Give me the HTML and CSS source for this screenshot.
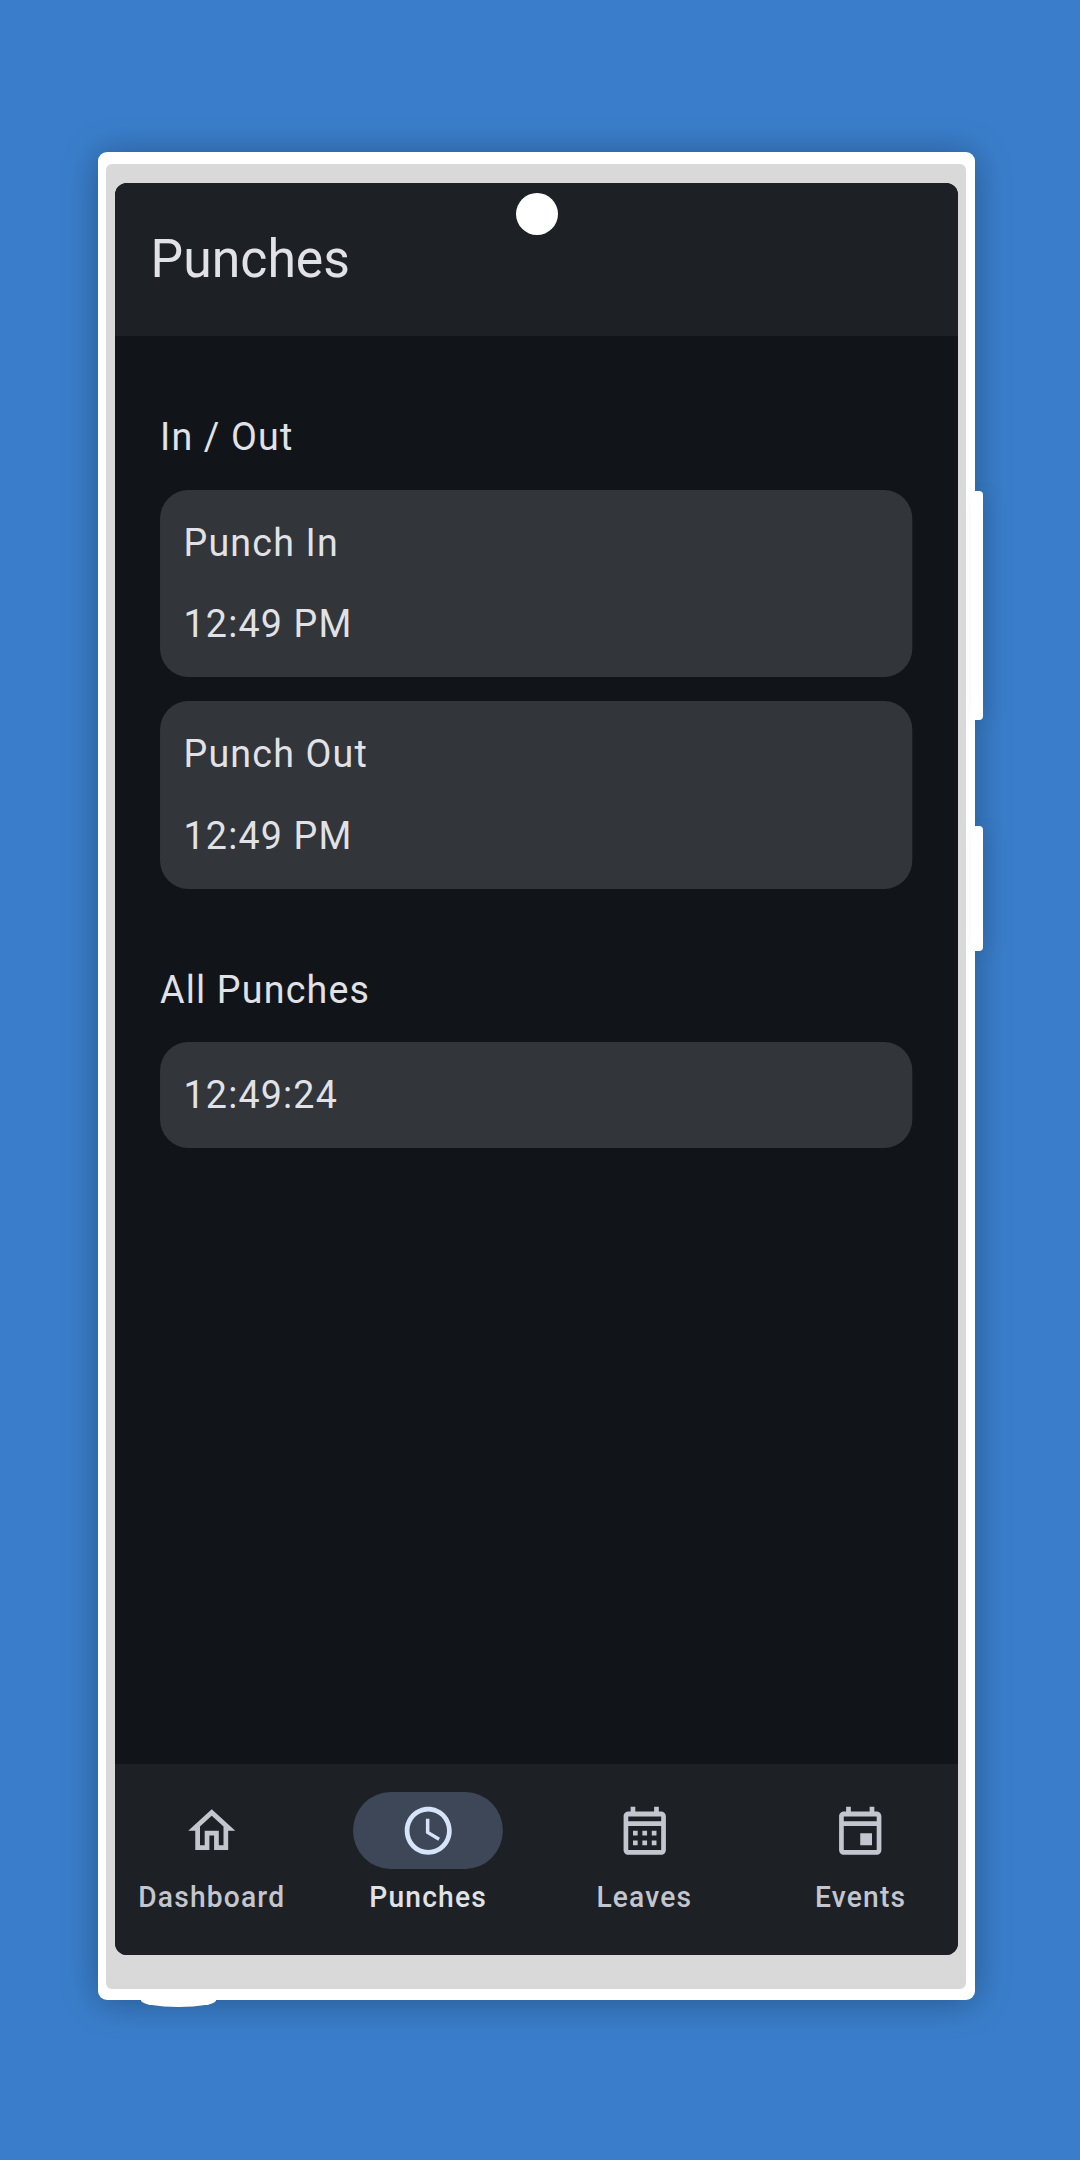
FILE: index.html
```html
<!DOCTYPE html>
<html lang="en">
<head>
<meta charset="utf-8">
<title>Punches</title>
<link rel="stylesheet" href="styles.css">
</head>
<body>
<div class="phone">
  <span class="side-key volume"></span>
  <span class="side-key power"></span>
  <span class="stylus"></span>
  <div class="bezel">
    <div class="screen">
      <div class="app">
        <header class="top-bar"><h1 class="title">Punches</h1></header>
        <main class="content">
          <section class="group">
            <h2 class="text">In / Out</h2>
            <div class="card"><p class="text">Punch In</p><p class="text">12:49 PM</p></div>
            <div class="card"><p class="text">Punch Out</p><p class="text">12:49 PM</p></div>
          </section>
          <section class="group">
            <h2 class="text">All Punches</h2>
            <div class="card"><p class="text">12:49:24</p></div>
          </section>
        </main>
        <nav class="nav">
          <a class="item">
            <span class="pill"><svg class="icon" viewBox="0 0 24 24"><path d="M12 5.69l5 4.5V18h-2v-6H9v6H7v-7.81l5-4.5M12 3L2 12h3v8h6v-6h2v6h6v-8h3L12 3z"/></svg></span>
            <span class="label">Dashboard</span>
          </a>
          <a class="item active">
            <span class="pill"><svg class="icon" viewBox="0 0 24 24"><path d="M11.99 2C6.47 2 2 6.48 2 12s4.47 10 9.99 10C17.52 22 22 17.52 22 12S17.52 2 11.99 2zM12 20c-4.42 0-8-3.58-8-8s3.58-8 8-8 8 3.58 8 8-3.58 8-8 8zm.5-13H11v6l5.25 3.15.75-1.23-4.5-2.67z"/></svg></span>
            <span class="label">Punches</span>
          </a>
          <a class="item">
            <span class="pill"><svg class="icon" viewBox="0 0 24 24"><path d="M19 4h-1V2h-2v2H8V2H6v2H5c-1.11 0-1.99.9-1.99 2L3 20c0 1.1.89 2 2 2h14c1.1 0 2-.9 2-2V6c0-1.1-.9-2-2-2zm0 16H5V10h14v10zm0-12H5V6h14v2zM9 14H7v-2h2v2zm4 0h-2v-2h2v2zm4 0h-2v-2h2v2zm-8 4H7v-2h2v2zm4 0h-2v-2h2v2zm4 0h-2v-2h2v2z"/></svg></span>
            <span class="label">Leaves</span>
          </a>
          <a class="item">
            <span class="pill"><svg class="icon" viewBox="0 0 24 24"><path d="M19 4h-1V2h-2v2H8V2H6v2H5c-1.11 0-1.99.9-1.99 2L3 20c0 1.1.89 2 2 2h14c1.1 0 2-.9 2-2V6c0-1.1-.9-2-2-2zm0 16H5V10h14v10zm0-12H5V6h14v2zm-2 5h-5v5h5v-5z"/></svg></span>
            <span class="label">Events</span>
          </a>
        </nav>
      </div>
      <span class="camera"></span>
    </div>
  </div>
</div>
</body>
</html>
```
FILE: styles.css
```css
* { box-sizing: border-box; }

body {
  margin: 0;
  height: 2160px;
  padding: 152px 0 0 98px;
  background: #3a7ecb;
  font-family: Roboto, "Liberation Sans", sans-serif;
  overflow: hidden;
}

h1, h2, p { margin: 0; font-weight: 400; }

.phone {
  position: relative;
  width: 876.5px;
  height: 1848px;
  padding: 11.5px 8.5px 11.5px 8px;
  border-radius: 9px;
  background: #fff;
  box-shadow: 0 2px 36px rgba(0, 0, 0, .32);
}

.side-key {
  position: absolute;
  right: -8px;
  width: 12px;
  border-radius: 0 4px 4px 0;
  background: #fff;
  box-shadow: 6px 2px 20px -4px rgba(0, 0, 0, .25);
}
.volume { top: 339px; height: 229px; }
.power { top: 674px; height: 125px; }

.stylus {
  position: absolute;
  left: 42.5px;
  bottom: -7px;
  width: 75px;
  height: 13px;
  border-radius: 0 0 50% 50%;
  background: #fff;
}

.bezel {
  position: relative;
  height: 100%;
  padding: 19px 8px 33.5px 8.5px;
  border-radius: 6px;
  background: #d9d9d9;
}

.screen {
  position: relative;
  height: 100%;
  border-radius: 12px;
  background: #111418;
  overflow: hidden;
}

.camera {
  position: absolute;
  left: 401.5px;
  top: 10.5px;
  width: 42px;
  height: 42px;
  border-radius: 50%;
  background: #fff;
}

/* The app is laid out 864px wide and narrowed a little to fit the device. */
.app {
  display: flex;
  flex-direction: column;
  width: 864px;
  height: 100%;
  margin-left: -1.9px;
  transform: scaleX(.9796);
  transform-origin: 0 0;
}

.top-bar {
  height: 153.6px;
  padding: 43.6px 38.4px 0;
  background: #1d2024;
}

.title {
  font-size: 52.8px;
  line-height: 67.2px;
  color: #e1e2e8;
}

.content {
  flex: 1;
  display: flex;
  flex-direction: column;
  gap: 72px;
  padding: 71.8px 48px;
}

.group { display: flex; flex-direction: column; gap: 24.2px; }

.text {
  font-size: 38.4px;
  line-height: 57.6px;
  letter-spacing: 1.2px;
  color: #e1e2e8;
}

.card {
  display: flex;
  flex-direction: column;
  gap: 24.2px;
  padding: 24px;
  border-radius: 28.8px;
  background: #323539;
}

.nav {
  display: grid;
  grid-template-columns: repeat(4, 1fr);
  gap: 19.2px;
  height: 191.5px;
  padding-top: 28.6px;
  background: #1d2024;
}

.item {
  display: flex;
  flex-direction: column;
  align-items: center;
  gap: 9.6px;
  color: #c3c6cf;
}

.pill {
  display: flex;
  align-items: center;
  justify-content: center;
  width: 153.6px;
  height: 76.8px;
  border-radius: 38.4px;
}

.icon { width: 57.6px; height: 57.6px; fill: currentColor; }

.label {
  font-size: 28.8px;
  line-height: 38.4px;
  font-weight: 500;
  letter-spacing: 1.2px;
}

.active .pill { background: #3d4758; color: #d7e3f8; }
.active .label { color: #e1e2e8; }
```
